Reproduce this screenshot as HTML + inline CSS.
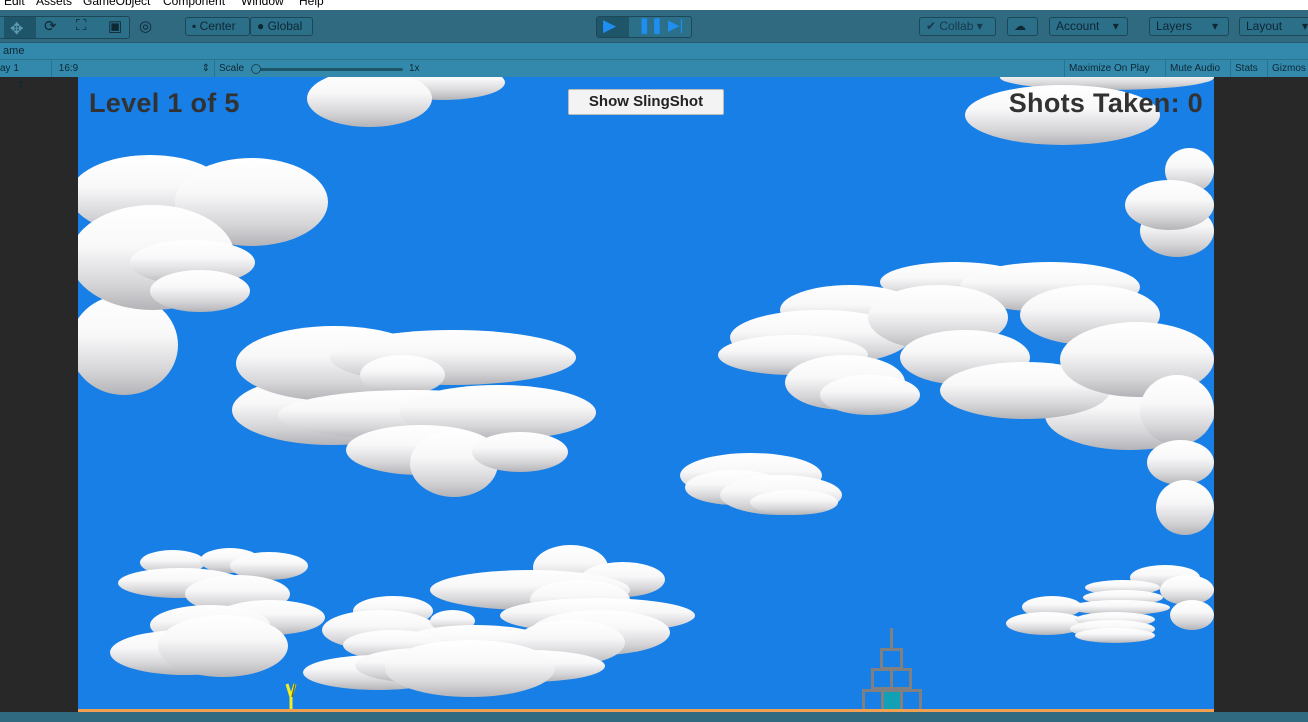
<!DOCTYPE html>
<html><head><style>
*{margin:0;padding:0;box-sizing:border-box}
body{width:1308px;height:722px;overflow:hidden;position:relative;background:#282828;font-family:"Liberation Sans",sans-serif}
.a{position:absolute}
.menu{left:0;top:0;width:1308px;height:10px;background:#fff;font-size:12px;color:#000;overflow:hidden}
.menu span{position:absolute;top:-6px}
.tb{left:0;top:10px;width:1308px;height:33px;background:#2f6a81;border-bottom:1px solid #285a6e}
.btn{position:absolute;height:19px;border:1px solid #1d4757;border-radius:3px;background:#2c6f89;color:#0d2733;font-size:12px;line-height:17px;padding-left:6px}
.tab{left:0;top:43px;width:1308px;height:16px;background:#3389ac;font-size:11px;color:#0d2733;line-height:16px}
.ctl{left:0;top:59px;width:1308px;height:18px;background:#3389ac;border-top:1px solid #2a7390;font-size:10px;color:#0d2733;line-height:17px}
.ctl span{position:absolute;top:0;height:17px;padding:0 4px;border-left:1px solid #2a7390}
.c{position:absolute;border-radius:50%;background:linear-gradient(to bottom,#fff 0%,#f8f8f9 40%,#d6d6d9 75%,#b4b4b8 100%)}
</style></head><body>
<div class="a menu"><span style="left:4px">Edit</span><span style="left:36px">Assets</span><span style="left:83px">GameObject</span><span style="left:163px">Component</span><span style="left:241px">Window</span><span style="left:299px">Help</span></div>
<div class="a tb">
<div class="btn" style="left:-2px;top:6px;width:132px;height:23px;padding:0"></div>
<div class="a" style="left:4px;top:7px;width:32px;height:21px;background:#1f5569"></div>
<div class="a" style="left:10px;top:9px;color:#5a9bb5;font-size:16px">✥</div>
<div class="a" style="left:44px;top:7px;color:#0d2733;font-size:15px">⟳</div>
<div class="a" style="left:76px;top:7px;color:#0d2733;font-size:15px">⛶</div>
<div class="a" style="left:108px;top:7px;color:#0d2733;font-size:15px">▣</div>
<div class="a" style="left:139px;top:7px;color:#0d2733;font-size:15px">◎</div>
<div class="btn" style="left:185px;top:7px;width:65px">▪ Center</div>
<div class="btn" style="left:250px;top:7px;width:63px">● Global</div>
<div class="a" style="left:596px;top:6px;width:96px;height:22px;border:1px solid #1d4757;border-radius:3px;background:#2c6f89"></div>
<div class="a" style="left:597px;top:7px;width:32px;height:20px;background:#1f5569"></div>
<div class="a" style="left:603px;top:6px;color:#1e8ef0;font-size:17px">▶</div>
<div class="a" style="left:638px;top:6px;color:#1e8ef0;font-size:15px;font-weight:bold">❚❚</div>
<div class="a" style="left:668px;top:6px;color:#1e8ef0;font-size:15px">▶|</div>
<div class="btn" style="left:919px;top:7px;width:77px;color:#16394a">✔ Collab ▾</div>
<div class="btn" style="left:1007px;top:7px;width:31px">☁</div>
<div class="btn" style="left:1049px;top:7px;width:79px">Account &nbsp;&nbsp; ▾</div>
<div class="btn" style="left:1149px;top:7px;width:80px">Layers &nbsp;&nbsp;&nbsp;&nbsp; ▾</div>
<div class="btn" style="left:1239px;top:7px;width:80px">Layout &nbsp;&nbsp;&nbsp;&nbsp; ▾</div>
</div>
<div class="a tab">&nbsp;ame</div>
<div class="a ctl">
<span style="left:-4px;width:52px;border:none">ay 1 &nbsp;&nbsp;&nbsp;&nbsp;&nbsp;&nbsp;⇕</span>
<span style="left:51px;width:162px">&nbsp;16:9<b style="position:absolute;right:3px;font-weight:normal">⇕</b></span>
<span style="left:214px;width:260px">Scale</span>
<div class="a" style="left:255px;top:8px;width:148px;height:3px;background:#1f5569;border-radius:2px"></div>
<div class="a" style="left:251px;top:4px;width:10px;height:10px;border:1px solid #1d4757;border-radius:50%;background:#3389ac"></div>
<div class="a" style="left:409px;top:0;">1x</div>
<span style="left:1064px">Maximize On Play</span>
<span style="left:1165px">Mute Audio</span>
<span style="left:1230px">Stats</span>
<span style="left:1267px">Gizmos</span>
</div>
<div class="a" style="left:0;top:712px;width:1308px;height:10px;background:#2f6a81"></div>
<div class="a" style="left:78px;top:77px;width:1136px;height:635px;overflow:hidden;background:#187fe6">
<div style="position:relative;left:-78px;top:-77px;width:1308px;height:722px">
<div class="c" style="left:380px;top:65px;width:125px;height:35px"></div>
<div class="c" style="left:307px;top:70px;width:125px;height:57px"></div>
<div class="c" style="left:1000px;top:65px;width:214px;height:25px"></div>
<div class="c" style="left:965px;top:85px;width:195px;height:60px"></div>
<div class="c" style="left:70px;top:295px;width:108px;height:100px"></div>
<div class="c" style="left:70px;top:155px;width:160px;height:80px"></div>
<div class="c" style="left:175px;top:158px;width:153px;height:88px"></div>
<div class="c" style="left:70px;top:205px;width:165px;height:105px"></div>
<div class="c" style="left:130px;top:240px;width:125px;height:45px"></div>
<div class="c" style="left:150px;top:270px;width:100px;height:42px"></div>
<div class="c" style="left:1165px;top:148px;width:49px;height:45px"></div>
<div class="c" style="left:1140px;top:205px;width:74px;height:52px"></div>
<div class="c" style="left:1125px;top:180px;width:89px;height:50px"></div>
<div class="c" style="left:232px;top:375px;width:200px;height:70px"></div>
<div class="c" style="left:236px;top:326px;width:196px;height:75px"></div>
<div class="c" style="left:330px;top:330px;width:246px;height:55px"></div>
<div class="c" style="left:360px;top:355px;width:85px;height:40px"></div>
<div class="c" style="left:278px;top:390px;width:270px;height:50px"></div>
<div class="c" style="left:400px;top:385px;width:196px;height:55px"></div>
<div class="c" style="left:346px;top:425px;width:150px;height:50px"></div>
<div class="c" style="left:410px;top:430px;width:88px;height:67px"></div>
<div class="c" style="left:472px;top:432px;width:96px;height:40px"></div>
<div class="c" style="left:880px;top:262px;width:150px;height:40px"></div>
<div class="c" style="left:960px;top:262px;width:180px;height:50px"></div>
<div class="c" style="left:780px;top:285px;width:140px;height:50px"></div>
<div class="c" style="left:730px;top:310px;width:180px;height:55px"></div>
<div class="c" style="left:718px;top:335px;width:150px;height:40px"></div>
<div class="c" style="left:1020px;top:285px;width:140px;height:60px"></div>
<div class="c" style="left:868px;top:285px;width:140px;height:65px"></div>
<div class="c" style="left:900px;top:330px;width:130px;height:55px"></div>
<div class="c" style="left:785px;top:355px;width:120px;height:55px"></div>
<div class="c" style="left:820px;top:375px;width:100px;height:40px"></div>
<div class="c" style="left:1045px;top:380px;width:169px;height:70px"></div>
<div class="c" style="left:940px;top:362px;width:170px;height:57px"></div>
<div class="c" style="left:1060px;top:322px;width:154px;height:75px"></div>
<div class="c" style="left:1140px;top:375px;width:74px;height:70px"></div>
<div class="c" style="left:1147px;top:440px;width:67px;height:45px"></div>
<div class="c" style="left:1156px;top:480px;width:58px;height:55px"></div>
<div class="c" style="left:680px;top:453px;width:142px;height:45px"></div>
<div class="c" style="left:685px;top:470px;width:100px;height:35px"></div>
<div class="c" style="left:720px;top:475px;width:122px;height:40px"></div>
<div class="c" style="left:750px;top:490px;width:88px;height:25px"></div>
<div class="c" style="left:140px;top:550px;width:65px;height:25px"></div>
<div class="c" style="left:200px;top:548px;width:60px;height:25px"></div>
<div class="c" style="left:118px;top:568px;width:125px;height:30px"></div>
<div class="c" style="left:230px;top:552px;width:78px;height:28px"></div>
<div class="c" style="left:185px;top:575px;width:105px;height:38px"></div>
<div class="c" style="left:215px;top:600px;width:110px;height:35px"></div>
<div class="c" style="left:150px;top:605px;width:120px;height:40px"></div>
<div class="c" style="left:110px;top:630px;width:150px;height:45px"></div>
<div class="c" style="left:158px;top:615px;width:130px;height:62px"></div>
<div class="c" style="left:533px;top:545px;width:75px;height:45px"></div>
<div class="c" style="left:580px;top:562px;width:85px;height:35px"></div>
<div class="c" style="left:430px;top:570px;width:200px;height:40px"></div>
<div class="c" style="left:530px;top:580px;width:100px;height:40px"></div>
<div class="c" style="left:500px;top:598px;width:195px;height:35px"></div>
<div class="c" style="left:353px;top:596px;width:80px;height:30px"></div>
<div class="c" style="left:322px;top:610px;width:115px;height:40px"></div>
<div class="c" style="left:430px;top:610px;width:45px;height:22px"></div>
<div class="c" style="left:530px;top:610px;width:140px;height:45px"></div>
<div class="c" style="left:400px;top:625px;width:150px;height:35px"></div>
<div class="c" style="left:515px;top:620px;width:110px;height:45px"></div>
<div class="c" style="left:343px;top:630px;width:100px;height:30px"></div>
<div class="c" style="left:450px;top:650px;width:155px;height:32px"></div>
<div class="c" style="left:303px;top:655px;width:150px;height:35px"></div>
<div class="c" style="left:355px;top:648px;width:135px;height:35px"></div>
<div class="c" style="left:385px;top:640px;width:170px;height:57px"></div>
<div class="c" style="left:1130px;top:565px;width:70px;height:25px"></div>
<div class="c" style="left:1085px;top:580px;width:75px;height:15px"></div>
<div class="c" style="left:1083px;top:590px;width:80px;height:15px"></div>
<div class="c" style="left:1160px;top:575px;width:54px;height:30px"></div>
<div class="c" style="left:1022px;top:596px;width:60px;height:22px"></div>
<div class="c" style="left:1070px;top:600px;width:100px;height:15px"></div>
<div class="c" style="left:1170px;top:600px;width:44px;height:30px"></div>
<div class="c" style="left:1006px;top:612px;width:80px;height:23px"></div>
<div class="c" style="left:1075px;top:612px;width:80px;height:15px"></div>
<div class="c" style="left:1070px;top:620px;width:85px;height:18px"></div>
<div class="c" style="left:1075px;top:628px;width:80px;height:15px"></div>
<div class="a" style="left:890px;top:628px;width:3px;height:22px;background:#808080"></div>
<div class="a" style="left:880px;top:648px;width:23px;height:22px;border:3px solid #808080"></div>
<div class="a" style="left:871px;top:668px;width:22px;height:22px;border:3px solid #808080"></div>
<div class="a" style="left:890px;top:668px;width:22px;height:22px;border:3px solid #808080"></div>
<div class="a" style="left:862px;top:689px;width:22px;height:24px;border:3px solid #808080"></div>
<div class="a" style="left:881px;top:689px;width:22px;height:24px;border:3px solid #808080;background:#12a0b4"></div>
<div class="a" style="left:900px;top:689px;width:22px;height:24px;border:3px solid #808080"></div>
<svg class="a" style="left:284px;top:682px" width="14" height="30"><path d="M3 2 L7 15 L11 2 M7 15 V30" stroke="#f2ee20" stroke-width="3" fill="none"/><path d="M11 2 L8 15" stroke="#6b6a20" stroke-width="1.5"/></svg>
<div class="a" style="left:78px;top:709px;width:1136px;height:3px;background:#f0a050"></div>
<div class="a" style="left:89px;top:88px;font-size:27px;font-weight:bold;color:#323232;letter-spacing:0.3px">Level 1 of 5</div>
<div class="a" style="left:568px;top:89px;width:156px;height:26px;background:#f3f3f3;border:1px solid #bbb;border-radius:2px;font-size:15px;font-weight:bold;color:#222;text-align:center;line-height:24px">Show SlingShot</div>
<div class="a" style="right:105px;top:88px;font-size:27px;font-weight:bold;color:#323232;letter-spacing:0.3px">Shots Taken: 0</div>
</div></div>
</body></html>
